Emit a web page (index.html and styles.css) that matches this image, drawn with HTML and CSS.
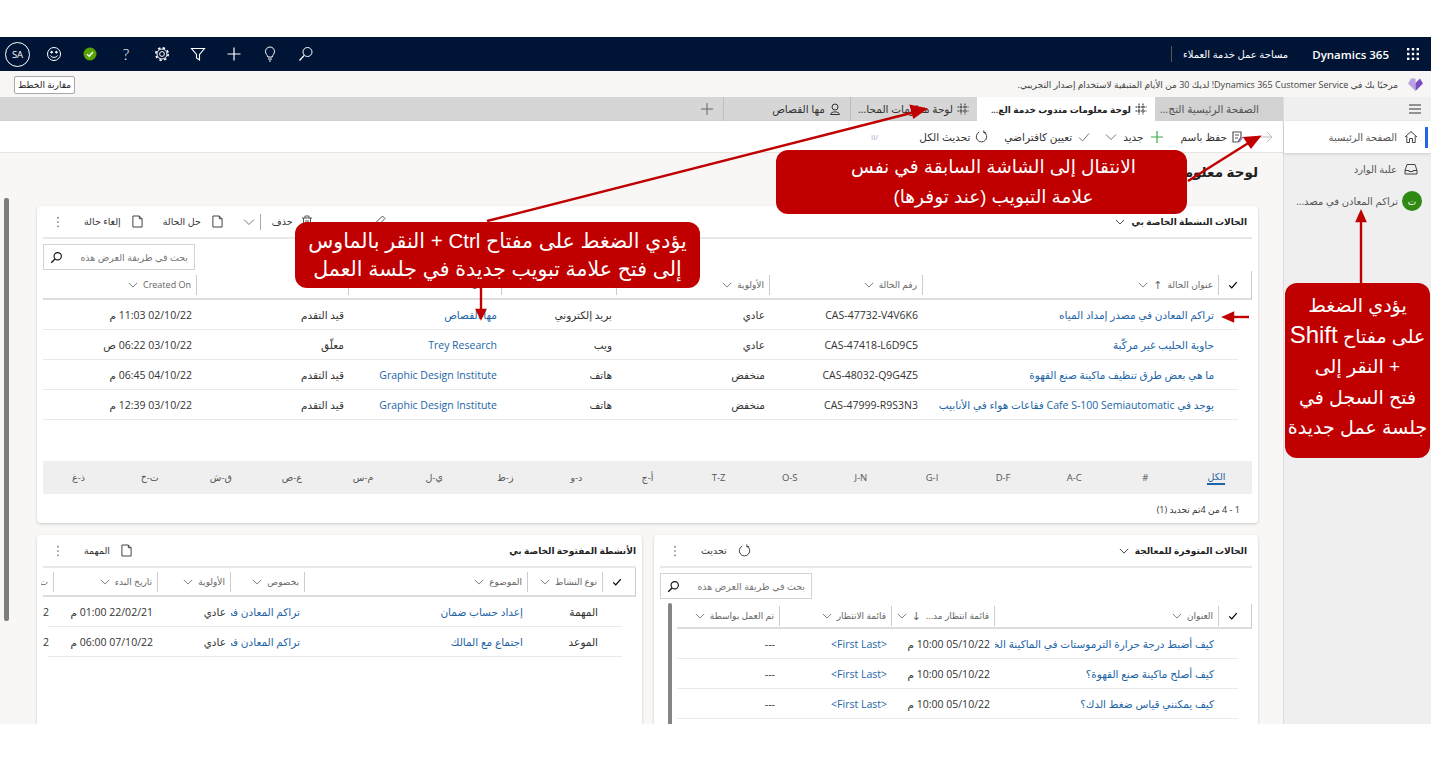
FILE: index.html
```html
<!DOCTYPE html>
<html lang="ar" dir="rtl">
<head>
    <meta charset="UTF-8">
    <title>مساحة عمل خدمة العملاء</title>
    <link rel="stylesheet" href="styles.css">
</head>
<body>
    <svg class="sprite" width="0" height="0">
        <symbol id="chev" viewBox="0 0 12 12"><path d="M1 3.5 6 8.5 11 3.5" fill="none" stroke="currentColor"/></symbol>
        <symbol id="find" viewBox="0 0 16 16"><circle cx="9.5" cy="6.5" r="4.5" fill="none" stroke="currentColor" stroke-width="1.4"/><path d="M6.2 9.8 1.5 14.5" stroke="currentColor" stroke-width="1.6"/></symbol>
        <symbol id="check" viewBox="0 0 12 12"><path d="M1.5 6.5 4.5 9.5 10.5 2.5" fill="none" stroke="currentColor" stroke-width="1.5"/></symbol>
        <symbol id="page" viewBox="0 0 12 14"><path d="M1 1H8L11 4V13H1ZM8 1V4H11" fill="none" stroke="currentColor"/></symbol>
        <symbol id="dots" viewBox="0 0 4 14"><circle cx="2" cy="2" r="1" fill="currentColor"/><circle cx="2" cy="7" r="1" fill="currentColor"/><circle cx="2" cy="12" r="1" fill="currentColor"/></symbol>
        <symbol id="refresh" viewBox="0 0 14 14"><path d="M4.5 2.2A5.6 5.6 0 1 0 9.5 2.2M9.5 .5V3H12" fill="none" stroke="currentColor"/></symbol>
        <symbol id="grid" viewBox="0 0 12 12"><path d="M4 .5V11.5M8 .5V11.5M.5 4H11.5M.5 8H11.5" stroke="currentColor" stroke-dasharray="2 .6"/></symbol>
    </svg>

    <div class="frame">
        <header class="topbar">
            <div class="top-brand">
                <svg class="waffle" width="14" height="14" viewBox="0 0 14 14" fill="#fff"><rect x="1" y="1" width="2.4" height="2.4"/><rect x="5.8" y="1" width="2.4" height="2.4"/><rect x="10.6" y="1" width="2.4" height="2.4"/><rect x="1" y="5.8" width="2.4" height="2.4"/><rect x="5.8" y="5.8" width="2.4" height="2.4"/><rect x="10.6" y="5.8" width="2.4" height="2.4"/><rect x="1" y="10.6" width="2.4" height="2.4"/><rect x="5.8" y="10.6" width="2.4" height="2.4"/><rect x="10.6" y="10.6" width="2.4" height="2.4"/></svg>
                <span class="brand-name" dir="ltr">Dynamics 365</span>
                <span class="app-name">مساحة عمل خدمة العملاء</span>
            </div>
            <div class="top-tools">
                <span class="tool"><svg width="16" height="16" viewBox="0 0 16 16" fill="none" stroke="#fff"><circle cx="9.5" cy="6" r="4.5"/><path d="M6.2 9.4 1.5 14.5" stroke-width="1.3"/></svg></span>
                <span class="tool"><svg width="16" height="16" viewBox="0 0 16 16" fill="none" stroke="#fff"><path d="M5.8 11C5.6 9 3.5 8 3.5 5.5A4.5 4.5 0 0 1 12.5 5.5C12.5 8 10.4 9 10.2 11ZM6 13H10M7 15H9"/></svg></span>
                <span class="tool"><svg width="16" height="16" viewBox="0 0 16 16" stroke="#fff" stroke-width="1.2"><path d="M1.5 8H14.5M8 1.5V14.5"/></svg></span>
                <span class="tool"><svg width="16" height="16" viewBox="0 0 16 16" fill="none" stroke="#fff" stroke-width="1.1"><path d="M1.5 2.5H14.5L9.5 8.5V14L6.5 12V8.5Z"/></svg></span>
                <span class="tool"><svg width="16" height="16" viewBox="0 0 16 16" fill="none" stroke="#fff"><circle cx="8" cy="8" r="2.4"/><circle cx="8" cy="8" r="5"/><circle cx="8" cy="8" r="6.2" stroke-width="1.6" stroke-dasharray="2.4 2.47"/></svg></span>
                <span class="tool help">?</span>
                <span class="tool"><svg width="14" height="14" viewBox="0 0 14 14"><circle cx="7" cy="7" r="6.5" fill="#57a300"/><path d="M4 7.2 6.2 9.2 10 5" fill="none" stroke="#fff" stroke-width="1.5"/></svg></span>
                <span class="tool"><svg width="16" height="16" viewBox="0 0 16 16" fill="none" stroke="#fff"><circle cx="8" cy="8" r="6.5"/><circle cx="5.6" cy="6.2" r=".9" fill="#fff"/><circle cx="10.4" cy="6.2" r=".9" fill="#fff"/><path d="M4.5 9.5C5.5 12 10.5 12 11.5 9.5"/></svg></span>
                <span class="avatar" dir="ltr">SA</span>
            </div>
        </header>

        <div class="notice">
            <svg class="heart" width="17" height="15" viewBox="0 0 17 15"><path d="M8.5 14 1 6.5 4 1.5H8.5Z" fill="#b9a3e3"/><path d="M8.5 14 16 6.5 13 1.5 8.5 6Z" fill="#7b4fc4"/></svg>
            <span class="notice-text">مرحبًا بك في Dynamics 365 Customer Service! لديك 30 من الأيام المتبقية لاستخدام إصدار التجريبي.</span>
            <button class="plan-btn">مقارنة الخطط</button>
        </div>

        <div class="workspace">
            <aside class="sidebar">
                <div class="burger"><svg width="14" height="10" viewBox="0 0 14 10" stroke="#333" stroke-width="1.2"><path d="M1 1H13M1 5H13M1 9H13"/></svg></div>
                <div class="nav-item nav-active">
                    <svg width="14" height="14" viewBox="0 0 14 14" fill="none" stroke="#444"><path d="M1 7 7 1.5 13 7M2.8 6V12.5H5.5V8.5H8.5V12.5H11.2V6"/></svg>
                    <span>الصفحة الرئيسية</span>
                </div>
                <div class="nav-item">
                    <svg width="14" height="14" viewBox="0 0 14 14" fill="none" stroke="#444"><path d="M1 8.5 3 2.5H11L13 8.5V12H1ZM1 8.5H5V9.5H9V8.5H13"/></svg>
                    <span>علبة الوارد</span>
                </div>
                <div class="nav-item nav-session">
                    <span class="session-dot">ت</span>
                    <span>تراكم المعادن في مصد...</span>
                </div>
            </aside>

            <main class="content">
                <div class="tabs">
                    <div class="tab tab-home">الصفحة الرئيسية التج...</div>
                    <div class="tab tab-active"><svg width="12" height="12"><use href="#grid"/></svg>لوحة معلومات مندوب خدمة الع...</div>
                    <div class="tab tab-mid"><svg width="12" height="12"><use href="#grid"/></svg>لوحة معلومات المحا...</div>
                    <div class="tab tab-person"><svg width="12" height="12" viewBox="0 0 12 12" fill="none" stroke="#333"><circle cx="6" cy="4" r="3"/><path d="M1.5 11.5C2 8 10 8 10.5 11.5Z"/></svg>مها القصاص</div>
                    <div class="tab-plus"><svg width="12" height="12" viewBox="0 0 12 12" stroke="#666"><path d="M0 6H12M6 0V12"/></svg></div>
                </div>

                <div class="commands">
                    <span class="cmd back"><svg width="14" height="12" viewBox="0 0 14 12" fill="none" stroke="#bbb"><path d="M1 6H13M8 1 13 6 8 11"/></svg></span>
                    <span class="cmd save"><svg width="12" height="12" viewBox="0 0 12 12" fill="none" stroke="#555" stroke-width="1.2"><path d="M1 1H9V6L6 11H1ZM3 4H7M3 7H6"/><path d="M7 11 11 6" stroke="#8764b8"/></svg>حفظ باسم</span>
                    <span class="cmd new"><svg width="14" height="14" viewBox="0 0 14 14" stroke="#3fa650" stroke-width="1.2"><path d="M1 7H13M7 1V13"/></svg>جديد<svg class="muted" width="12" height="12"><use href="#chev"/></svg></span>
                    <span class="cmd default"><svg class="muted" width="12" height="12" viewBox="0 0 12 12" fill="none" stroke="currentColor"><path d="M1 6.5 4.5 10 11 2.5"/></svg>تعيين كافتراضي</span>
                    <span class="cmd refresh-all"><svg width="13" height="13"><use href="#refresh"/></svg>تحديث الكل</span>
                    <span class="cmd faint" dir="ltr">II/</span>
                </div>

                <div class="board">
                    <div class="page-scroll"></div>
                    <h1 class="board-title">لوحة معلومات مندوب خدمة العملاء</h1>

                    <section class="card card-main">
                        <div class="card-head">
                            <div class="card-title">الحالات النشطة الخاصة بي<svg width="10" height="10"><use href="#chev"/></svg></div>
                            <div class="card-actions">
                                <svg class="act-edit" width="13" height="13" viewBox="0 0 13 13" fill="none" stroke="#555"><path d="M1 12 2 8.5 9.5 1 12 3.5 4.5 11Z"/></svg>
                                <span class="act act-delete"><svg width="12" height="13" viewBox="0 0 12 13" fill="none" stroke="#555"><path d="M1 3H11M4 3V1H8V3M2.5 3V12H9.5V3M5 5V10M7 5V10"/></svg>حذف</span>
                                <span class="act-sep"></span>
                                <svg class="muted act-chev" width="12" height="12"><use href="#chev"/></svg>
                                <span class="act"><svg width="11" height="13"><use href="#page"/></svg>حل الحالة</span>
                                <span class="act"><svg width="11" height="13"><use href="#page"/></svg>إلغاء حالة</span>
                                <svg class="muted" width="4" height="12"><use href="#dots"/></svg>
                            </div>
                        </div>
                        <div class="search"><span>بحث في طريقة العرض هذه</span><svg width="13" height="13"><use href="#find"/></svg></div>

                        <div class="row head-row cols-main">
                            <div class="th check-cell"><svg width="10" height="10"><use href="#check"/></svg></div>
                            <div class="th">عنوان الحالة<span class="sort">↑</span><svg width="10" height="10"><use href="#chev"/></svg></div>
                            <div class="th">رقم الحالة<svg width="10" height="10"><use href="#chev"/></svg></div>
                            <div class="th">الأولوية<svg width="10" height="10"><use href="#chev"/></svg></div>
                            <div class="th">قناة<svg width="10" height="10"><use href="#chev"/></svg></div>
                            <div class="th">العميل<svg width="10" height="10"><use href="#chev"/></svg></div>
                            <div class="th">الحالة<svg width="10" height="10"><use href="#chev"/></svg></div>
                            <div class="th th-last">Created On<svg width="10" height="10"><use href="#chev"/></svg></div>
                        </div>
                        <div class="row body-row cols-main">
                            <div></div><div class="td"><a>تراكم المعادن في مصدر إمداد المياه</a></div><div class="td">CAS-47732-V4V6K6</div><div class="td">عادي</div><div class="td">بريد إلكتروني</div><div class="td"><a>مها القصاص</a></div><div class="td">قيد التقدم</div><div class="td">02/10/22 11:03 م</div>
                        </div>
                        <div class="row body-row cols-main">
                            <div></div><div class="td"><a>حاوية الحليب غير مركّبة</a></div><div class="td">CAS-47418-L6D9C5</div><div class="td">عادي</div><div class="td">ويب</div><div class="td"><a>Trey Research</a></div><div class="td">معلّق</div><div class="td">03/10/22 06:22 ص</div>
                        </div>
                        <div class="row body-row cols-main">
                            <div></div><div class="td"><a>ما هي بعض طرق تنظيف ماكينة صنع القهوة</a></div><div class="td">CAS-48032-Q9G4Z5</div><div class="td">منخفض</div><div class="td">هاتف</div><div class="td"><a>Graphic Design Institute</a></div><div class="td">قيد التقدم</div><div class="td">04/10/22 06:45 م</div>
                        </div>
                        <div class="row body-row cols-main">
                            <div></div><div class="td"><a>يوجد في Cafe S-100 Semiautomatic فقاعات هواء في الأنابيب</a></div><div class="td">CAS-47999-R9S3N3</div><div class="td">منخفض</div><div class="td">هاتف</div><div class="td"><a>Graphic Design Institute</a></div><div class="td">قيد التقدم</div><div class="td">03/10/22 12:39 م</div>
                        </div>

                        <div class="alpha">
                            <span class="alpha-on">الكل</span><span>#</span><span>A-C</span><span>D-F</span><span>G-I</span><span>J-N</span><span>O-S</span><span>T-Z</span><span>أ-ج</span><span>د-و</span><span>ز-ط</span><span>ي-ل</span><span>م-س</span><span>ع-ص</span><span>ق-ش</span><span>ت-خ</span><span>ذ-غ</span>
                        </div>
                        <div class="card-foot">1 - 4 من 4تم تحديد (1)</div>
                    </section>

                    <div class="lower">
                        <section class="card card-queue">
                            <div class="card-head">
                                <div class="card-title">الحالات المتوفرة للمعالجة<svg width="10" height="10"><use href="#chev"/></svg></div>
                                <div class="card-actions">
                                    <span class="act"><svg width="13" height="13"><use href="#refresh"/></svg>تحديث</span>
                                    <svg class="muted" width="4" height="12"><use href="#dots"/></svg>
                                </div>
                            </div>
                            <div class="search"><span>بحث في طريقة العرض هذه</span><svg width="13" height="13"><use href="#find"/></svg></div>
                            <div class="queue-list">
                                <div class="row head-row cols-queue">
                                    <div class="th check-cell"><svg width="10" height="10"><use href="#check"/></svg></div>
                                    <div class="th">العنوان<svg width="10" height="10"><use href="#chev"/></svg></div>
                                    <div class="th">قائمة انتظار مد...<span class="sort">↓</span><svg width="10" height="10"><use href="#chev"/></svg></div>
                                    <div class="th">قائمة الانتظار<svg width="10" height="10"><use href="#chev"/></svg></div>
                                    <div class="th th-last">تم العمل بواسطة<svg width="10" height="10"><use href="#chev"/></svg></div>
                                </div>
                                <div class="row body-row cols-queue">
                                    <div></div><div class="td"><a>كيف أضبط درجة حرارة الترموستات في الماكينة الخاصة بي</a></div><div class="td">05/10/22 10:00 م</div><div class="td"><a dir="ltr">&lt;First Last&gt;</a></div><div class="td">---</div>
                                </div>
                                <div class="row body-row cols-queue">
                                    <div></div><div class="td"><a>كيف أصلح ماكينة صنع القهوة؟</a></div><div class="td">05/10/22 10:00 م</div><div class="td"><a dir="ltr">&lt;First Last&gt;</a></div><div class="td">---</div>
                                </div>
                                <div class="row body-row cols-queue">
                                    <div></div><div class="td"><a>كيف يمكنني قياس ضغط الدك؟</a></div><div class="td">05/10/22 10:00 م</div><div class="td"><a dir="ltr">&lt;First Last&gt;</a></div><div class="td">---</div>
                                </div>
                            </div>
                        </section>

                        <section class="card card-tasks">
                            <div class="card-head">
                                <div class="card-title">الأنشطة المفتوحة الخاصة بي</div>
                                <div class="card-actions">
                                    <span class="act"><svg width="11" height="13"><use href="#page"/></svg>المهمة</span>
                                    <svg class="muted" width="4" height="12"><use href="#dots"/></svg>
                                </div>
                            </div>
                            <div class="row head-row cols-tasks">
                                <div class="th check-cell"><svg width="10" height="10"><use href="#check"/></svg></div>
                                <div class="th">نوع النشاط<svg width="10" height="10"><use href="#chev"/></svg></div>
                                <div class="th">الموضوع<svg width="10" height="10"><use href="#chev"/></svg></div>
                                <div class="th">بخصوص<svg width="10" height="10"><use href="#chev"/></svg></div>
                                <div class="th">الأولوية<svg width="10" height="10"><use href="#chev"/></svg></div>
                                <div class="th">تاريخ البدء<svg width="10" height="10"><use href="#chev"/></svg></div>
                                <div class="th th-last">ت</div>
                            </div>
                            <div class="row body-row cols-tasks">
                                <div></div><div class="td">المهمة</div><div class="td"><a>إعداد حساب ضمان</a></div><div class="td"><a>تراكم المعادن في مصدر</a></div><div class="td">عادي</div><div class="td">22/02/21 01:00 م</div><div class="td">2</div>
                            </div>
                            <div class="row body-row cols-tasks">
                                <div></div><div class="td">الموعد</div><div class="td"><a>اجتماع مع المالك</a></div><div class="td"><a>تراكم المعادن في مصدر</a></div><div class="td">عادي</div><div class="td">07/10/22 06:00 م</div><div class="td">2</div>
                            </div>
                        </section>
                    </div>
                </div>
            </main>
        </div>
    </div>

    <!-- annotations over the screenshot -->
    <svg class="arrows" width="1431" height="761" viewBox="0 0 1431 761">
        <g stroke="#c00000" stroke-width="2.4" fill="#c00000">
            <path d="M487 221 915 112"/><path d="M925 109 911 106 914 117Z"/>
            <path d="M1188 181 1250 142"/><path d="M1259 137 1245 138 1251 147Z"/>
            <path d="M1361 283V220"/><path d="M1361 212 1357 221H1365Z"/>
            <path d="M1249 317H1232"/><path d="M1224 317 1233 313V321Z"/>
            <path d="M481 288V311"/><path d="M481 318 477 310H485Z"/>
        </g>
    </svg>
    <div class="callout callout-back">الانتقال إلى الشاشة السابقة في نفس<br>علامة التبويب (عند توفرها)</div>
    <div class="callout callout-ctrl">يؤدي الضغط على مفتاح Ctrl + النقر بالماوس<br>إلى فتح علامة تبويب جديدة في جلسة العمل</div>
    <div class="callout callout-shift">يؤدي الضغط<br>على مفتاح <span class="key">Shift</span><br>+ النقر إلى<br>فتح السجل في<br>جلسة عمل جديدة</div>
</body>
</html>
```

FILE: styles.css
```css
* {
    box-sizing: border-box;
}

html, body {
    margin: 0;
    height: 761px;
    overflow: hidden;
    background: #fff;
}

body {
    position: relative;
    font-family: "Open Sans", "DejaVu Sans", sans-serif;
    font-size: 10px;
    color: #333;
}

.sprite {
    position: absolute;
}

svg {
    flex: none;
}

.frame {
    margin-top: 37px;
    height: 687px;
    overflow: hidden;
    display: flex;
    flex-direction: column;
    background: #f8f7f6;
}

/* top navy bar */
.topbar {
    height: 34px;
    flex: none;
    background: #001536;
    color: #fff;
    display: flex;
    justify-content: space-between;
    align-items: center;
}

.top-brand {
    display: flex;
    align-items: center;
}

.waffle {
    margin: 0 11px 0 0;
}

.brand-name {
    font-size: 11.5px;
    font-weight: 600;
    margin-right: 17px;
}

.app-name {
    font-size: 10px;
    margin-right: 24px;
    padding-left: 12px;
    position: relative;
}

.app-name::after {
    content: "";
    position: absolute;
    left: 0;
    top: -1px;
    bottom: -1px;
    border-left: 1px solid #555;
}

.top-tools {
    display: flex;
    align-items: center;
    padding-left: 5px;
}

.tool {
    width: 36px;
    display: flex;
    justify-content: center;
    align-items: center;
}

.help {
    font-family: Lato, sans-serif;
    font-weight: 300;
    font-size: 16px;
    line-height: 16px;
}

.avatar {
    width: 25px;
    height: 25px;
    margin-right: 6px;
    border: 1px solid #fff;
    border-radius: 50%;
    font-size: 9.5px;
    display: flex;
    align-items: center;
    justify-content: center;
}

/* trial notice */
.notice {
    height: 25px;
    flex: none;
    margin-top: 1px;
    display: flex;
    align-items: center;
    background: #f7f6f5;
    padding: 0 7px 0 14px;
}

.notice-text {
    flex: 1;
    margin-right: 9px;
    font-size: 9px;
    color: #444;
}

.plan-btn {
    width: 61px;
    height: 18px;
    padding: 0;
    background: #fff;
    border: 1px solid #a8a8a8;
    border-radius: 2px;
    font-family: inherit;
    font-size: 9px;
    color: #222;
}

.workspace {
    flex: 1;
    display: flex;
    min-height: 0;
}

/* right nav */
.sidebar {
    width: 148px;
    flex: none;
    background: #efefef;
    border-left: 1px solid #dcdcdc;
    color: #555;
}

.burger {
    height: 24px;
    padding-right: 9px;
    display: flex;
    align-items: center;
    background: #f0f0f0;
}

.nav-item {
    height: 32px;
    display: flex;
    align-items: center;
    gap: 7px;
    padding-right: 13px;
    font-size: 10px;
    white-space: nowrap;
}

.nav-active {
    background: #fff;
    box-shadow: 0 1px 3px rgba(0, 0, 0, 0.15);
    position: relative;
}

.nav-active::before {
    content: "";
    position: absolute;
    right: 3px;
    top: 6px;
    bottom: 5px;
    width: 3px;
    background: #2266e3;
}

.nav-session {
    padding-right: 9px;
    gap: 4px;
}

.session-dot {
    width: 20px;
    height: 20px;
    border-radius: 50%;
    background: #2f8a14;
    color: #fff;
    font-size: 9px;
    display: flex;
    align-items: center;
    justify-content: center;
}

.content {
    flex: 1;
    min-width: 0;
    display: flex;
    flex-direction: column;
}

/* session tabs */
.tabs {
    height: 24px;
    flex: none;
    display: flex;
    background: #d6d6d6;
    border-bottom: 1px solid #cfcfcf;
}

.tab {
    height: 24px;
    display: flex;
    align-items: center;
    gap: 4px;
    font-size: 10.5px;
    white-space: nowrap;
    overflow: hidden;
}

.tab-home {
    width: 128px;
    padding-right: 24px;
    background: #d2d2d2;
    color: #555;
}

.tab-active {
    width: 178px;
    padding-right: 8px;
    background: #fff;
    font-size: 9px;
    font-weight: 600;
    color: #222;
}

.tab-mid {
    width: 127px;
    padding-right: 8px;
    border-left: 1px solid #bbb;
}

.tab-person {
    width: 127px;
    padding-right: 9px;
    border-left: 1px solid #c0c0c0;
}

.tab-plus {
    width: 32px;
    display: flex;
    align-items: center;
    justify-content: center;
}

/* command bar */
.commands {
    height: 32px;
    flex: none;
    display: flex;
    align-items: center;
    background: #fff;
    border-bottom: 1px solid #e4e4e4;
    font-size: 10.5px;
    white-space: nowrap;
}

.cmd {
    display: inline-flex;
    align-items: center;
    gap: 5px;
}

.back {
    margin-right: 10px;
}

.save {
    margin-right: 15px;
}

.new {
    margin-right: 17px;
    gap: 6px;
}

.default {
    margin-right: 15px;
    gap: 6px;
}

.refresh-all {
    margin-right: 16px;
}

.faint {
    margin-right: 41px;
    color: #b8a9c9;
    font-size: 8px;
}

.muted {
    color: #777;
}

/* dashboard */
.board {
    flex: 1;
    position: relative;
    padding: 0 25px 0 37px;
    overflow: hidden;
}

.page-scroll {
    position: absolute;
    left: 4px;
    top: 45px;
    width: 5px;
    height: 423px;
    border-radius: 2px;
    background: #7d7d7d;
}

.board-title {
    height: 53px;
    margin: 0;
    padding-top: 10px;
    font-size: 13.5px;
    font-weight: 600;
    color: #222;
    white-space: nowrap;
}

.card {
    background: #fff;
    border-radius: 4px;
    box-shadow: 0 1px 3px rgba(0, 0, 0, 0.18);
    padding: 0 6px;
}

.card-main {
    height: 317px;
}

.lower {
    display: flex;
    gap: 12px;
    margin-top: 12px;
}

.card-queue {
    width: 604px;
    height: 200px;
    flex: none;
    position: relative;
}

.card-tasks {
    width: 605px;
    height: 200px;
    flex: none;
}

.card-head {
    height: 33px;
    display: flex;
    justify-content: space-between;
    align-items: center;
    padding-right: 5px;
    border-bottom: 2px solid #e8e8e8;
}

.card-tasks .card-head {
    padding-right: 0;
}

.card-title {
    display: flex;
    align-items: center;
    gap: 6px;
    font-size: 9px;
    font-weight: 600;
    color: #222;
}

.card-actions {
    display: flex;
    align-items: center;
    font-size: 9.5px;
    padding-left: 13px;
    white-space: nowrap;
}

.act {
    display: inline-flex;
    align-items: center;
    gap: 11px;
    margin-left: 24px;
}

.act + .act {
    margin-right: -4px;
}

.act-chev {
    margin-left: 20px;
}

.act-edit {
    margin-left: 60px;
}

.act-delete {
    gap: 8px;
    margin-left: 11px;
}

.act-sep {
    height: 16px;
    margin-left: 5px;
    border-right: 1px solid #aaa;
}

.search {
    width: 152px;
    height: 26px;
    margin: 5px auto 0 0;
    padding: 0 6px;
    display: flex;
    align-items: center;
    justify-content: space-between;
    background: #fff;
    border: 1px solid #d4d4d4;
    color: #777;
    font-size: 9.5px;
    white-space: nowrap;
}

.search svg {
    color: #111;
}

.row {
    display: grid;
    white-space: nowrap;
}

.cols-main {
    grid-template-columns: 33px 296px 153px 153px 115px 153px 152px 153px;
}

.cols-queue {
    grid-template-columns: 33px 224px 103px 112px 103px;
}

.cols-tasks {
    grid-template-columns: 33px 75px 223px 74px 73px 104px 12px;
}

.head-row {
    height: 29px;
    align-items: center;
    border-bottom: 2px solid #dcdcdc;
    border-right: 1px solid #ccc;
    color: #666;
    font-size: 9px;
}

.card-main .head-row {
    margin-top: 1px;
}

.card-queue .head-row {
    height: 25px;
}

.th {
    height: 20px;
    padding-right: 5px;
    display: flex;
    align-items: center;
    gap: 5px;
    overflow: hidden;
    border-left: 1px solid #ccc;
}

.th-last {
    border-left: 0;
}

.check-cell {
    padding-right: 13px;
    color: #000;
}

.sort {
    font-size: 11px;
    color: #666;
}

.body-row {
    height: 30px;
    align-items: center;
    background: linear-gradient(#eaeaea, #eaeaea) left bottom / calc(100% - 14px) 1px no-repeat;
    font-size: 10.5px;
}

.card-tasks .body-row {
    background-size: calc(100% - 19px) 1px;
    background-position: 5px bottom;
}

.td {
    padding-right: 5px;
    overflow: hidden;
}

.td a {
    color: #1d65a6;
}

.alpha {
    height: 33px;
    margin-top: 41px;
    display: grid;
    grid-template-columns: repeat(17, 1fr);
    align-items: center;
    justify-items: center;
    background: #efefef;
    color: #555;
    font-size: 9.5px;
}

.alpha-on {
    color: #2a5d9e;
    border-bottom: 2px solid #1d65a6;
}

.card-foot {
    margin-top: 9px;
    padding-right: 12px;
    font-size: 9px;
}

.queue-list {
    margin: 5px 0 0 17px;
}

.card-queue::after {
    content: "";
    position: absolute;
    left: 14px;
    top: 68px;
    bottom: 0;
    width: 4px;
    background: #858585;
    border-radius: 2px;
}

/* annotations */
.arrows {
    position: absolute;
    left: 0;
    top: 0;
    pointer-events: none;
}

.callout {
    position: absolute;
    display: flex;
    align-items: center;
    justify-content: center;
    text-align: center;
    background: #c00000;
    color: #fff;
    border-radius: 12px;
    font-family: "Liberation Sans", "DejaVu Sans", sans-serif;
    font-size: 18.5px;
    line-height: 30px;
}

.callout-back {
    left: 776px;
    top: 150px;
    width: 411px;
    height: 64px;
    padding-left: 24px;
}

.callout-ctrl {
    left: 295px;
    top: 222px;
    width: 405px;
    height: 66px;
    font-size: 20.5px;
    line-height: 28px;
}

.callout-shift {
    left: 1285px;
    top: 283px;
    width: 145px;
    height: 175px;
    display: block;
    padding-top: 8px;
    font-size: 19px;
    line-height: 30.5px;
}

.key {
    font-size: 24px;
    line-height: 1;
}
```
